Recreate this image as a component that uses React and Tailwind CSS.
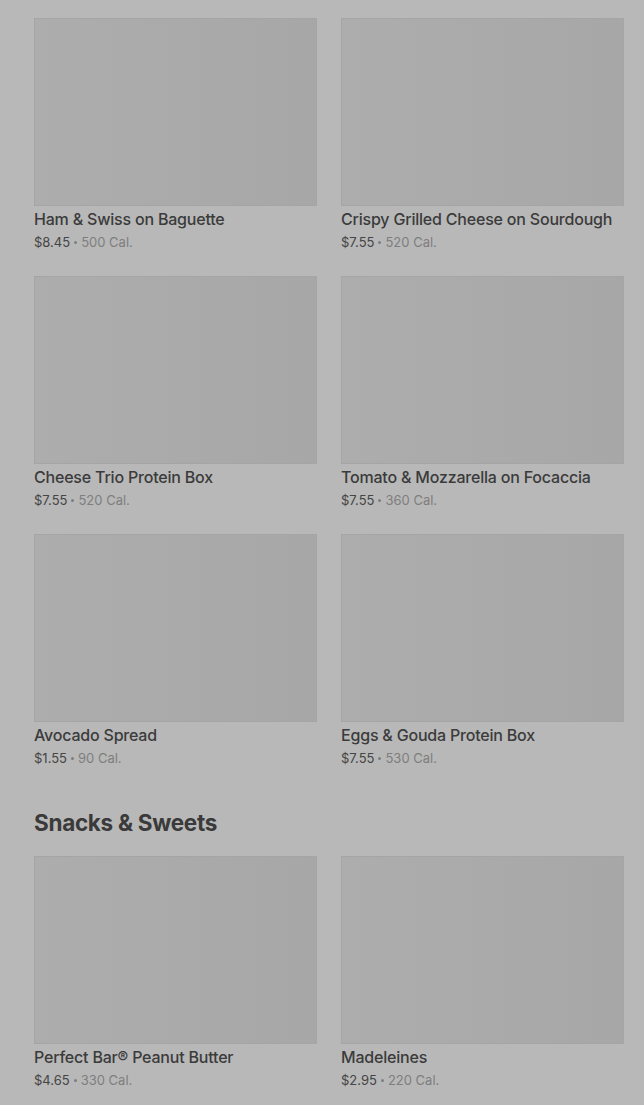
const rows1 = [
  { name: "Ham & Swiss on Baguette", price: "$8.45", cal: "500 Cal." },
  { name: "Crispy Grilled Cheese on Sourdough", price: "$7.55", cal: "520 Cal." },
  { name: "Cheese Trio Protein Box", price: "$7.55", cal: "520 Cal." },
  { name: "Tomato & Mozzarella on Focaccia", price: "$7.55", cal: "360 Cal." },
  { name: "Avocado Spread", price: "$1.55", cal: "90 Cal." },
  { name: "Eggs & Gouda Protein Box", price: "$7.55", cal: "530 Cal." },
];

const snacks = [
  { name: "Perfect Bar® Peanut Butter", price: "$4.65", cal: "330 Cal." },
  { name: "Madeleines", price: "$2.95", cal: "220 Cal." },
];

function Item({ item }) {
  return (
    <div className="flex flex-col">
      <div className="h-[188px] bg-gradient-to-r from-[#adadad] to-[#a7a7a7] border border-[#a5a5a5]" />
      <div className="mt-px text-[16px] leading-6 font-medium tracking-[-0.2px] text-[#3b3b3b] whitespace-nowrap">
        {item.name}
      </div>
      <div className="h-[21px] pt-[2px] flex items-center gap-[4px] text-[13px] leading-[19px] text-[#7e7e7e]">
        <span className="text-[#454545]">{item.price}</span>
        <span className="w-[3px] h-[3px] rounded-full bg-[#7e7e7e]" />
        <span>{item.cal}</span>
      </div>
    </div>
  );
}

export default function App() {
  return (
    <div
      className="min-h-[1105px] bg-[#b8b8b8] pl-[34px] pr-[20px] pt-[18px] overflow-hidden"
      style={{ fontFamily: "Inter, 'Noto Sans', sans-serif" }}
    >
      <div className="grid grid-cols-2 gap-x-6 gap-y-6">
        {rows1.map((it) => (
          <Item key={it.name} item={it} />
        ))}
      </div>

      <h2 className="mt-[39px] mb-[17px] text-[22.5px] leading-8 font-bold tracking-[-0.3px] text-[#3a3a3a]">
        Snacks &amp; Sweets
      </h2>

      <div className="grid grid-cols-2 gap-x-6 gap-y-6">
        {snacks.map((it) => (
          <Item key={it.name} item={it} />
        ))}
      </div>
    </div>
  );
}
